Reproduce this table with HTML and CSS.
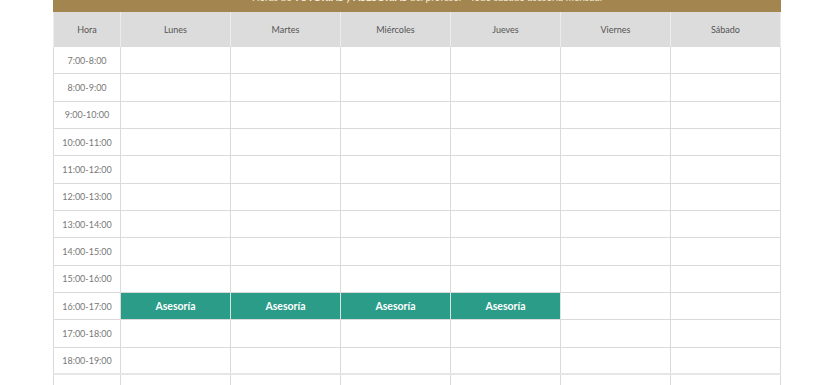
FILE: index.html
```html
<!DOCTYPE html>
<html lang="es">
<head>
<meta charset="utf-8">
<title>Horario</title>
<link rel="stylesheet" href="styles.css">
</head>
<body>
<div class="wrap">
  <div class="banner">Horas de <b>TUTORÍAS</b> y <b>ASESORÍAS</b> del profesor · Todo sábado asesoría mensual</div>
  <table class="schedule">
    <colgroup>
      <col class="c-hora"><col class="c-day"><col class="c-day"><col class="c-day"><col class="c-day"><col class="c-day"><col class="c-day">
    </colgroup>
    <thead>
      <tr><th>Hora</th><th>Lunes</th><th>Martes</th><th>Miércoles</th><th>Jueves</th><th>Viernes</th><th>Sábado</th></tr>
    </thead>
    <tbody>
      <tr><td class="time">7:00-8:00</td><td></td><td></td><td></td><td></td><td></td><td></td></tr>
      <tr><td class="time">8:00-9:00</td><td></td><td></td><td></td><td></td><td></td><td></td></tr>
      <tr><td class="time">9:00-10:00</td><td></td><td></td><td></td><td></td><td></td><td></td></tr>
      <tr><td class="time">10:00-11:00</td><td></td><td></td><td></td><td></td><td></td><td></td></tr>
      <tr><td class="time">11:00-12:00</td><td></td><td></td><td></td><td></td><td></td><td></td></tr>
      <tr><td class="time">12:00-13:00</td><td></td><td></td><td></td><td></td><td></td><td></td></tr>
      <tr><td class="time">13:00-14:00</td><td></td><td></td><td></td><td></td><td></td><td></td></tr>
      <tr><td class="time">14:00-15:00</td><td></td><td></td><td></td><td></td><td></td><td></td></tr>
      <tr><td class="time">15:00-16:00</td><td></td><td></td><td></td><td></td><td></td><td></td></tr>
      <tr><td class="time">16:00-17:00</td><td class="busy">Asesoría</td><td class="busy">Asesoría</td><td class="busy">Asesoría</td><td class="busy">Asesoría</td><td></td><td></td></tr>
      <tr><td class="time">17:00-18:00</td><td></td><td></td><td></td><td></td><td></td><td></td></tr>
      <tr class="sep"><td class="time">18:00-19:00</td><td></td><td></td><td></td><td></td><td></td><td></td></tr>
      <tr><td class="time">19:00-20:00</td><td></td><td></td><td></td><td></td><td></td><td></td></tr>
    </tbody>
  </table>
</div>
</body>
</html>
```
FILE: styles.css
```css
html, body {
  margin: 0;
  padding: 0;
  background: #ffffff;
  overflow: hidden;
}
body {
  font-family: Lato, "Open Sans", "Liberation Sans", sans-serif;
}
.wrap {
  width: 728px;
  margin: -11px 0 0 53px;
}
.banner {
  height: 23px;
  line-height: 16px;
  background: #a3864f;
  color: #f4ecd9;
  font-size: 10px;
  text-align: center;
  text-indent: 20px;
}
.banner b {
  font-weight: 900;
}
.schedule {
  width: 728px;
  border-collapse: collapse;
  table-layout: fixed;
}
.c-hora { width: 67px; }
.c-day { width: 110px; }
.schedule th {
  height: 34px;
  background: #dcdcdc;
  color: #555555;
  font-weight: 400;
  font-size: 9px;
  border-left: 1px solid #ececec;
  border-right: 1px solid #ececec;
  padding: 0;
}
.schedule td {
  height: 27.33px;
  padding: 0;
  border: 1px solid #dadada;
  font-size: 9px;
  text-align: center;
  box-sizing: border-box;
}
.schedule td.time {
  color: #777777;
}
.schedule td.busy {
  background: #2a9c88;
  color: #ffffff;
  font-weight: 700;
  font-size: 10.5px;
  border-color: #d4e8e3;
  border-top-color: #dadada;
  border-bottom-color: #dadada;
}
.schedule tr.sep td {
  border-bottom: 2px solid #e6e6e6;
}
```
